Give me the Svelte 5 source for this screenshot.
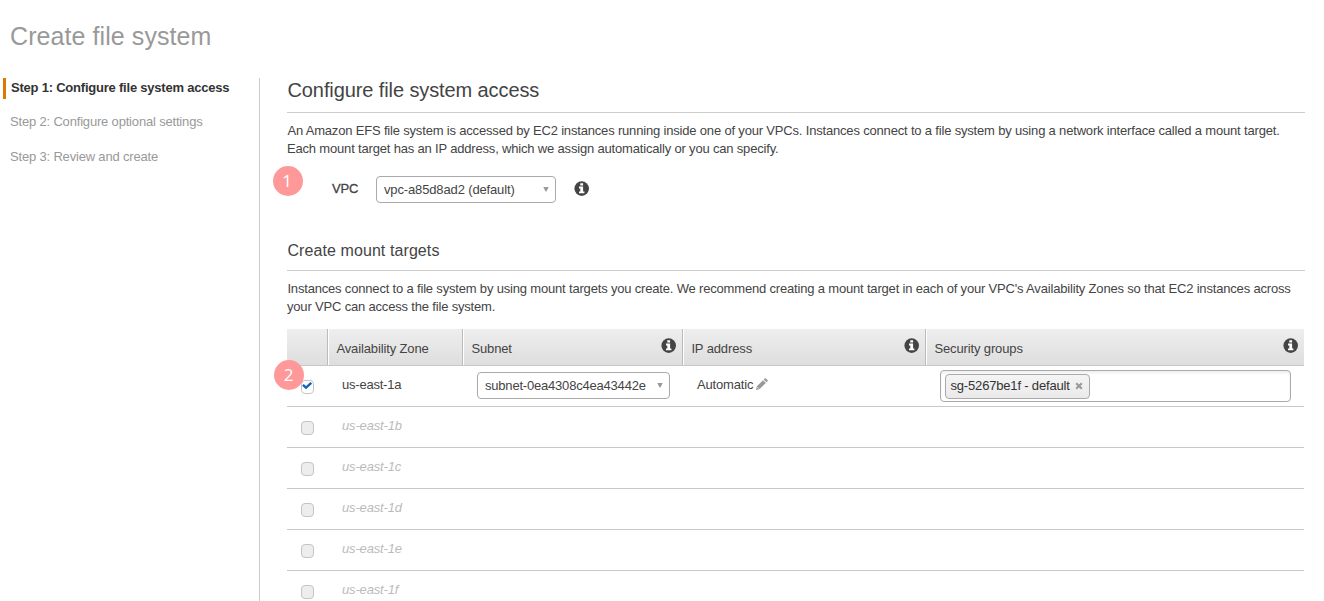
<script>
  const steps = ['Step 1: Configure file system access', 'Step 2: Configure optional settings', 'Step 3: Review and create'];
  const columns = [
    { label: '', info: false },
    { label: 'Availability Zone', info: false },
    { label: 'Subnet', info: true },
    { label: 'IP address', info: true },
    { label: 'Security groups', info: true }
  ];
  const zones = ['us-east-1b', 'us-east-1c', 'us-east-1d', 'us-east-1e', 'us-east-1f'];
</script>

{#snippet info()}
  <svg class="info" viewBox="0 0 15 15" width="15" height="15">
    <circle cx="7.7" cy="7.6" r="7.3" fill="#444" />
    <path d="M6.3 2.3h2.8v2.2H6.3zM5 5.6h4.1v4.8h1.3v1.9H5v-1.9h1.3V7.5H5z" fill="#fff" />
  </svg>
{/snippet}

{#snippet arrow()}
  <svg class="arrow" viewBox="0 0 6 5" width="6" height="5"><path d="M.3 0h5.4L3.4 4.6h-.8z" fill="#999" /></svg>
{/snippet}

<div class="page">
  <h1><span>Create file system</span></h1>
  <div class="body">
    <nav>
      {#each steps as step, i}
        <div class="step" class:active={i === 0}><span>{step}</span></div>
      {/each}
    </nav>
    <main>
      <h2><span>Configure file system access</span></h2>
      <p class="intro">
        <span>An Amazon EFS file system is accessed by EC2 instances running inside one of your VPCs. Instances connect to a file system by using a network interface called a mount target.</span><br />
        <span>Each mount target has an IP address, which we assign automatically or you can specify.</span>
      </p>
      <div class="vpc">
        <span class="badge one">1</span>
        <span class="label">VPC</span>
        <div class="select"><span>vpc-a85d8ad2 (default)</span>{@render arrow()}</div>
        {@render info()}
      </div>
      <h3><span>Create mount targets</span></h3>
      <p class="targets">
        <span>Instances connect to a file system by using mount targets you create. We recommend creating a mount target in each of your VPC's Availability Zones so that EC2 instances across</span><br />
        <span>your VPC can access the file system.</span>
      </p>
      <div class="table">
        <div class="row head">
          {#each columns as col}
            <div class="cell"><span>{col.label}</span>{#if col.info}{@render info()}{/if}</div>
          {/each}
        </div>
        <div class="row">
          <div class="check">
            <span class="box on"><svg viewBox="0 0 11 12" width="11" height="12"><path d="M.9 3.9 4 6.7 9.3 1.9" fill="none" stroke="#1166bb" stroke-width="2.4" /></svg></span>
            <span class="badge two">2</span>
          </div>
          <div class="zone"><span>us-east-1a</span></div>
          <div class="subnet"><div class="select"><span>subnet-0ea4308c4ea43442e</span>{@render arrow()}</div></div>
          <div class="ip">
            <span>Automatic</span>
            <svg viewBox="0 0 12 12" width="12" height="12">
              <path d="M0 12 .9 8.3 7 2.2 9.8 5 3.7 11.1zM7.7 1.5 8.7.5Q9.3 0 9.9.5l1.6 1.6q.5.6 0 1.2l-1 1z" fill="#999" />
              <path d="M1.4 9.2 2.8 10.6" stroke="#fff" stroke-width=".8" />
            </svg>
          </div>
          <div class="groups">
            <div class="field">
              <div class="tag"><span>sg-5267be1f - default</span>
                <svg viewBox="0 0 8 8" width="8" height="8"><path d="M1.2 1.2 6.8 6.8M6.8 1.2 1.2 6.8" stroke="#999" stroke-width="2.1" /></svg>
              </div>
            </div>
          </div>
        </div>
        {#each zones as zone}
          <div class="row off">
            <div class="check"><span class="box"></span></div>
            <div class="zone"><span>{zone}</span></div>
          </div>
        {/each}
      </div>
    </main>
  </div>
</div>

<style>
  :global(body) { margin: 0; background: #fff; overflow: hidden; }
  .page { box-sizing: border-box; height: 601px; overflow: hidden; font: 13px/18px "Liberation Sans", Arial, sans-serif; letter-spacing: -.178px; color: #444; white-space: nowrap; }
  h1, h2, h3, p { margin: 0; font-weight: 400; }
  h1 { height: 78px; box-sizing: border-box; padding: 21px 0 0 10px; font-size: 25px; line-height: 30px; letter-spacing: .08px; color: #999; }
  .body { display: flex; height: 523px; }
  nav { width: 259px; border-right: 1px solid #ccc; color: #999; }
  .step { height: 21px; line-height: 19px; margin: 0 0 14px 3px; padding-left: 7px; }
  .step.active { border-left: 3px solid #e07700; padding-left: 5px; margin-bottom: 13px; font-weight: 700; letter-spacing: -.22px; color: #333; }
  main { width: 1018px; margin-left: 27px; }
  h2 { height: 34px; border-bottom: 1px solid #ccc; font-size: 20px; line-height: 24px; letter-spacing: -.1px; text-indent: .5px; }
  .intro { padding-top: 9px; height: 36px; text-indent: .4px; }
  .vpc { position: relative; display: flex; align-items: center; height: 28px; margin-top: 18px; padding-left: 45px; }
  .vpc .label { width: 44px; line-height: 26px; align-self: flex-start; -webkit-text-stroke: .3px #444; }
  .select { box-sizing: border-box; display: flex; align-items: center; justify-content: space-between; height: 27px; padding: 0 6px 0 7px; border: 1px solid #aaa; border-radius: 4px; background: #fff; }
  .select > span { letter-spacing: -.2px; }
  .vpc .select { width: 180px; margin: -2px 18px 0 0; }
  .vpc .select > span { letter-spacing: -.14px; padding-top: 2px; }
  .vpc .info { margin-top: -3px; }
  .badge { position: absolute; width: 30px; height: 30px; border-radius: 50%; background: #ff9999; color: #fff; text-align: center; font: 17px/29px "Open Sans", sans-serif; letter-spacing: 0; }
  .one { left: -14.5px; top: -10px; text-indent: -1px; }
  .two { left: -13.5px; top: -6px; }
  h3 { height: 29px; padding-top: 1px; margin-top: 36px; border-bottom: 1px solid #ccc; font-size: 16px; line-height: 20px; letter-spacing: .09px; text-indent: .4px; }
  .targets { padding-top: 9px; height: 36px; text-indent: .4px; }
  .table { width: 1017px; margin-top: 13px; }
  .row { box-sizing: border-box; display: grid; grid-template-columns: 41px 135px 220px 243px 378px; height: 41px; border-bottom: 1px solid #c8c8c8; }
  .head { height: 37px; background: linear-gradient(#eee, #dedede); letter-spacing: -.13px; }
  .cell { display: flex; justify-content: space-between; padding: 11px 7px 0 7px; border-right: 1px solid #bbb; box-shadow: inset 1px 0 #fff; }
  .cell:first-child { box-shadow: none; }
  .cell:last-child { border-right: 0; }
  .cell > span { padding-left: 1px; text-indent: .4px; }
  .cell .info { margin: -2px -.5px 0 0; }
  .check { position: relative; padding: 14px 0 0 14px; }
  .box { display: block; box-sizing: border-box; width: 13px; height: 14px; border: 1px solid #c4c4c4; border-radius: 4px; background: #ededed; }
  .box.on { background: #fff; }
  .box svg { display: block; }
  .zone { padding: 10px 0 0 14px; letter-spacing: -.22px; }
  .off .zone { color: #bbb; font-style: italic; letter-spacing: -.16px; }
  .subnet { padding: 6px 0 0 14px; }
  .subnet .select { width: 193px; }
  .ip { padding: 10px 0 0 14px; display: flex; gap: 3px; }
  .ip svg { margin-top: 2px; }
  .groups { padding: 4px 0 0 14px; }
  .field { box-sizing: border-box; width: 351px; height: 32px; padding: 3px 4px; border: 1px solid #aaa; border-radius: 4px; box-shadow: inset 0 2px 3px #eee; }
  .tag { box-sizing: border-box; display: flex; align-items: center; justify-content: space-between; width: 145px; height: 25px; padding: 0 6px 1px 4.5px; border: 1px solid #aaa; border-radius: 4px; background: linear-gradient(#f4f4f4, #eaeaea); color: #333; }
</style>
